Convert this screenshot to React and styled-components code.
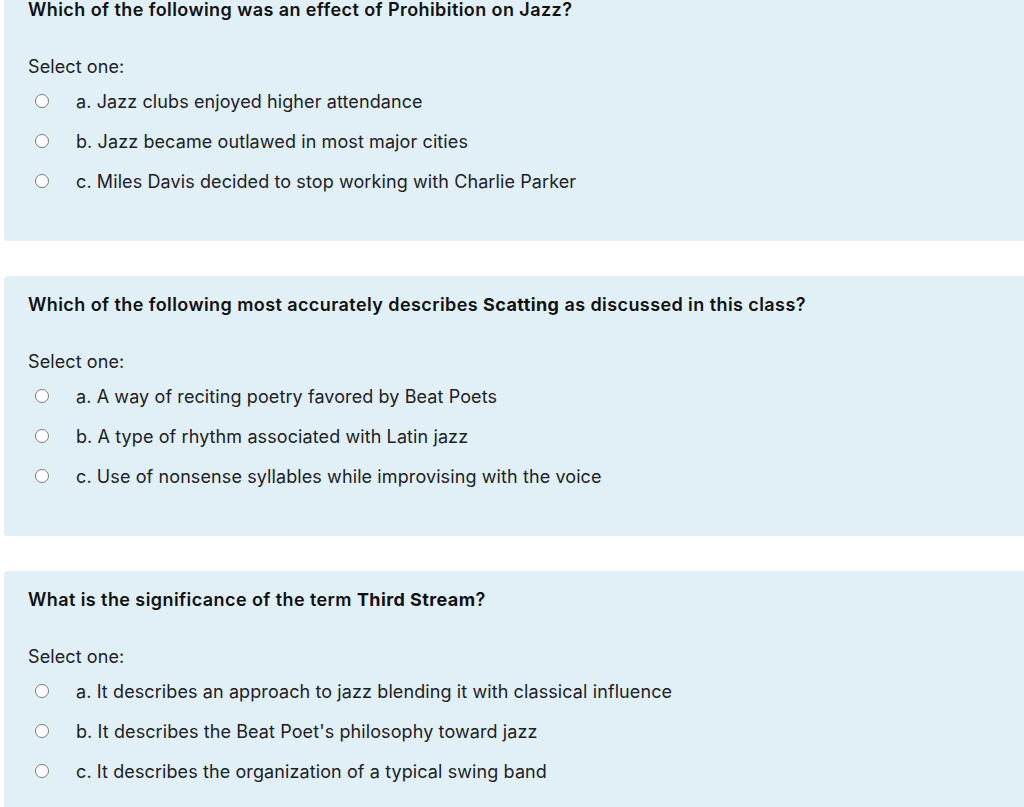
import React from "react";
import styled, { createGlobalStyle } from "styled-components";

const GlobalStyle = createGlobalStyle`
  body {
    margin: 0;
    background: #ffffff;
    font-family: Inter, "Noto Sans", "Liberation Sans", sans-serif;
    color: #1d2125;
    overflow: hidden;
  }
`;

const Page = styled.div`
  display: flex;
  flex-direction: column;
  gap: 35px;
  padding-left: 4px;
  margin-top: -19px;
  margin-right: -20px;
`;

const Card = styled.div`
  background: #e1f0f6;
  border-radius: 4px;
  padding: 17px 24px 0 24px;
  height: 260px;
  box-sizing: border-box;
`;

const Question = styled.div`
  font-size: 18px;
  line-height: 24px;
  font-weight: 600;
  color: #111;
  letter-spacing: 0.42px;
  white-space: nowrap;

  b {
    font-weight: 700;
  }
`;

const Prompt = styled.div`
  font-size: 18px;
  line-height: 24px;
  margin-top: 33px;
  margin-bottom: 2px;
  letter-spacing: 0.1px;
`;

const Options = styled.div`
  display: flex;
  flex-direction: column;
`;

const Option = styled.label`
  display: flex;
  align-items: center;
  height: 40px;
  font-size: 18px;
  letter-spacing: 0.1px;
`;

const Radio = styled.span`
  width: 14px;
  height: 14px;
  box-sizing: border-box;
  border-radius: 50%;
  border: 1px solid #7a7a7a;
  background: #fff;
  margin-left: 7px;
  margin-right: 27px;
  flex-shrink: 0;
`;

const questions = [
  {
    q: <>Which of the following was an effect of Prohibition on Jazz?</>,
    opts: [
      "a. Jazz clubs enjoyed higher attendance",
      "b. Jazz became outlawed in most major cities",
      "c. Miles Davis decided to stop working with Charlie Parker",
    ],
  },
  {
    q: (
      <>
        Which of the following most accurately describes <b>Scatting</b> as
        discussed in this class?
      </>
    ),
    opts: [
      "a. A way of reciting poetry favored by Beat Poets",
      "b. A type of rhythm associated with Latin jazz",
      "c. Use of nonsense syllables while improvising with the voice",
    ],
  },
  {
    q: (
      <>
        What is the significance of the term <b>Third Stream</b>?
      </>
    ),
    opts: [
      "a. It describes an approach to jazz blending it with classical influence",
      "b. It describes the Beat Poet's philosophy toward jazz",
      "c. It describes the organization of a typical swing band",
    ],
  },
];

export default function App() {
  return (
    <>
      <GlobalStyle />
      <Page>
        {questions.map((item, i) => (
          <Card key={i}>
            <Question>{item.q}</Question>
            <Prompt>Select one:</Prompt>
            <Options>
              {item.opts.map((o, j) => (
                <Option key={j}>
                  <Radio />
                  {o}
                </Option>
              ))}
            </Options>
          </Card>
        ))}
      </Page>
    </>
  );
}
